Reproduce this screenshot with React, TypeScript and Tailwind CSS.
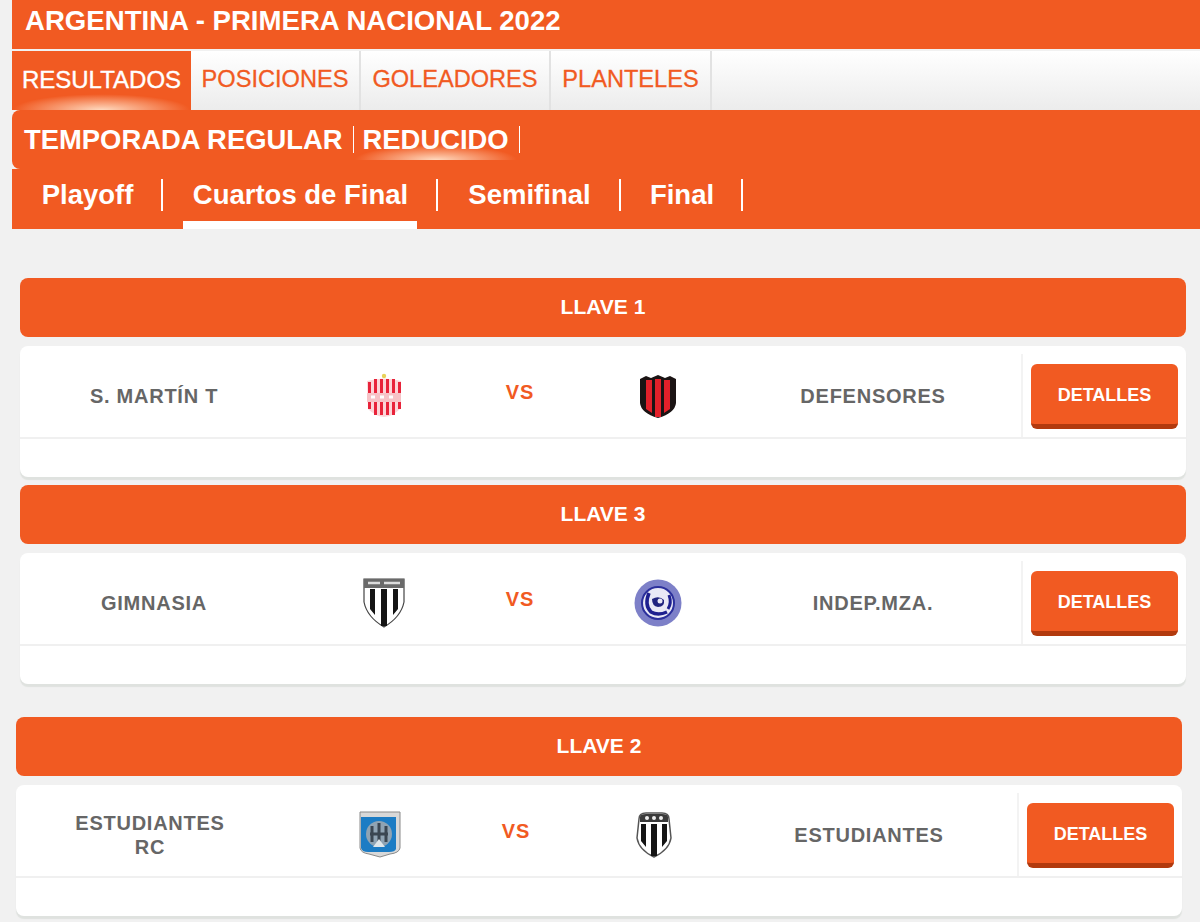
const font = "font-['Liberation_Sans',Arial,sans-serif]"

function SanMartinCrest() {
  const bars = [3, 9, 15, 21, 27, 33]
  return (
    <svg width="38" height="46" viewBox="0 0 38 46">
      <circle cx="19" cy="3" r="2.2" fill="#e8d25a" />
      <path d="M2 8 Q19 3 36 8 L35 36 Q28 43 19 44 Q10 43 3 36 Z" fill="#fbd5d8" />
      {bars.map((x) => (
        <rect key={x} x={x} y={x === 3 || x === 33 ? 9 : 6} width="3" height={x === 3 || x === 33 ? 27 : 36} fill="#e8233a" />
      ))}
      <rect x="2" y="20" width="34" height="9" fill="#f7c3c7" />
      <path d="M6 24h4M15 24h4M24 24h4" stroke="#fff" strokeWidth="3" />
    </svg>
  )
}

function DefensoresCrest() {
  return (
    <svg width="38" height="46" viewBox="0 0 38 46">
      <path d="M1 6 L7 3 L12 5 L19 2 L26 5 L31 3 L37 6 L37 30 Q36 40 19 45 Q2 40 1 30 Z" fill="#1b1414" />
      <path d="M7 7h6v33l-6-4zM16 6h6v38h-6zM25 7h6v29l-6 4z" fill="#e3202a" />
    </svg>
  )
}

function GimnasiaCrest() {
  return (
    <svg width="42" height="50" viewBox="0 0 42 50">
      <path d="M1 1 H41 V24 Q38 39 21 49 Q4 39 1 24 Z" fill="#fff" stroke="#444" strokeWidth="1.2" />
      <rect x="1" y="1" width="40" height="9" fill="#6a6a6a" />
      <path d="M5 5h12M21 5h16" stroke="#ddd" strokeWidth="2.5" />
      <path d="M7 11h5v26l-5-6zM18 11h6v37h-6zM30 11h5v20l-5 6z" fill="#141414" />
    </svg>
  )
}

function IndependienteCrest() {
  return (
    <svg width="48" height="48" viewBox="0 0 48 48">
      <circle cx="24" cy="24" r="23.5" fill="#7d80c8" />
      <circle cx="24" cy="24" r="16" fill="#e9e9f6" stroke="#2b2f9c" strokeWidth="2" />
      <path d="M15 14 Q10 26 17 33 Q24 37 33 33" fill="none" stroke="#1d1f8f" strokeWidth="3.5" />
      <path d="M35 16 Q38 24 34 30" fill="none" stroke="#1d1f8f" strokeWidth="3" />
      <path d="M18 20 Q25 16 30 21 Q31 28 24 28 Q18 27 18 20Z" fill="#20237f" />
      <circle cx="26" cy="22" r="2.5" fill="#e9e9f6" />
    </svg>
  )
}

function AtleticoRafaelaCrest() {
  return (
    <svg width="42" height="48" viewBox="0 0 42 48">
      <path d="M1 1 H41 V37 Q40 42 31 43 L21 46 L10 43 Q2 42 1 37 Z" fill="#d8d8d8" stroke="#8a8a8a" />
      <path d="M2 6 H37 V38 Q36 41 30 41 H9 Q3 41 2 37 Z" fill="#1c7cc4" />
      <circle cx="20" cy="23" r="13" fill="#8fa3b3" />
      <path d="M13 15v16M20 12v22M27 15v16M11 23h18" stroke="#3a4652" strokeWidth="3" />
      <path d="M20 28l6 8h-12z" fill="#dfe6ea" />
    </svg>
  )
}

function EstudiantesCrest() {
  return (
    <svg width="36" height="46" viewBox="0 0 36 46">
      <path d="M3 7 Q3 1 10 1 H26 Q33 1 33 7 L35 26 Q33 38 18 45 Q3 38 1 26 Z" fill="#fff" stroke="#555" strokeWidth="1.5" />
      <path d="M4 5 Q4 2 10 2 H26 Q32 2 32 5 V10 H4Z" fill="#3a3a3a" />
      <circle cx="11" cy="6" r="2" fill="#eee" />
      <circle cx="18" cy="6" r="2" fill="#eee" />
      <circle cx="25" cy="6" r="2" fill="#eee" />
      <path d="M5 12h5v23l-5-6zM15 12h6v32h-6zM26 12h5v17l-5 6z" fill="#141414" />
    </svg>
  )
}

type Llave = {
  title: string
  left: string
  right: string
  leftCrest: React.ReactNode
  rightCrest: React.ReactNode
}

function LlaveCard({ llave }: { llave: Llave }) {
  return (
    <div>
      <div className={`${font} flex h-[59px] items-center justify-center rounded-lg bg-[#f15a22] pb-0.5 text-[21px] font-bold text-white`}>
        {llave.title}
      </div>
      <div className="mt-[9px] h-[131px] rounded-lg bg-white shadow-[0_3px_1px_#dfe2df]">
        <div className="flex h-[93px] items-center border-b-2 border-[#f0f0f0] pt-2">
          <div className={`${font} w-[268px] px-12 text-center text-[20px] leading-[24px] font-bold tracking-[0.75px] text-[#666]`}>
            {llave.left}
          </div>
          <div className="flex w-[192px] justify-center">{llave.leftCrest}</div>
          <div className={`${font} w-[80px] pb-2 text-center text-[20px] font-bold tracking-[1px] text-[#f15a22]`}>VS</div>
          <div className="flex w-[196px] justify-center">{llave.rightCrest}</div>
          <div className={`${font} w-[234px] text-center text-[20px] leading-[24px] font-bold tracking-[0.75px] text-[#666]`}>
            {llave.right}
          </div>
          <div className="ml-[31px] flex h-full w-[164px] items-center border-l-2 border-[#f3f3f3] pt-0.5 pl-2">
            <button className={`${font} h-[65px] w-[147px] rounded-md border-b-[5px] border-[#b23a0e] bg-[#f15a22] pt-0.5 text-[18px] font-bold text-white`}>
              DETALLES
            </button>
          </div>
        </div>
      </div>
    </div>
  )
}

const firstGroup: Llave[] = [
  { title: 'LLAVE 1', left: 'S. MARTÍN T', right: 'DEFENSORES', leftCrest: <SanMartinCrest />, rightCrest: <DefensoresCrest /> },
  { title: 'LLAVE 3', left: 'GIMNASIA', right: 'INDEP.MZA.', leftCrest: <GimnasiaCrest />, rightCrest: <IndependienteCrest /> },
]

const secondLlave: Llave = {
  title: 'LLAVE 2',
  left: 'ESTUDIANTES RC',
  right: 'ESTUDIANTES',
  leftCrest: <AtleticoRafaelaCrest />,
  rightCrest: <EstudiantesCrest />,
}

const tabs = [
  { label: 'RESULTADOS', width: 'w-[179px]', active: true },
  { label: 'POSICIONES', width: 'w-[170px]', active: false },
  { label: 'GOLEADORES', width: 'w-[190px]', active: false },
  { label: 'PLANTELES', width: 'w-[161px]', active: false },
]

const rounds = [
  { label: 'Playoff', width: 'w-[151px]', active: false },
  { label: 'Cuartos de Final', width: 'w-[275px]', active: true },
  { label: 'Semifinal', width: 'w-[183px]', active: false },
  { label: 'Final', width: 'w-[122px]', active: false },
]

const glow = 'pointer-events-none absolute bottom-0 bg-[radial-gradient(ellipse_at_bottom,rgba(255,225,200,0.95),rgba(255,225,200,0)_70%)]'

export default function App() {
  return (
    <div className={`${font} h-[922px] overflow-hidden bg-[#f1f1f1]`}>
      <div className="ml-3">
        <div className="flex h-[49px] items-center bg-[#f15a22] pb-2 pl-[13px] text-[27.6px] font-bold text-white">
          ARGENTINA - PRIMERA NACIONAL 2022
        </div>
        <div className="mt-0.5 flex h-[59px] bg-gradient-to-b from-white to-[#ececec]">
          {tabs.map((tab) =>
            tab.active ? (
              <div key={tab.label} className={`${tab.width} relative flex items-center justify-center bg-[#f15a22] pb-0.5 text-[24px] whitespace-nowrap text-white [-webkit-text-stroke:0.4px_white]`}>
                {tab.label}
                <div className={`${glow} left-0 h-4 w-full`} />
              </div>
            ) : (
              <div key={tab.label} className={`${tab.width} flex items-center justify-center border-r-2 border-[#e2e2e2] pb-0.5 text-[23.6px] whitespace-nowrap text-[#f15a22] [-webkit-text-stroke:0.3px_#f15a22]`}>
                {tab.label}
              </div>
            ),
          )}
        </div>
        <div className="flex h-[59px] items-center rounded-l-lg bg-[#f15a22] pl-3 text-[27.4px] font-bold whitespace-nowrap text-white">
          <span>TEMPORADA REGULAR</span>
          <span className="mr-[9px] ml-[10px] h-[27px] w-px bg-white" />
          <span className="relative">
            REDUCIDO
            <span className={`${glow} -right-[9px] -bottom-[15px] -left-[9px] h-[15px]`} />
          </span>
          <span className="ml-[10px] h-[27px] w-px bg-white" />
        </div>
        <div className="flex h-[60px] bg-[#f15a22] text-[27.5px] font-bold whitespace-nowrap text-white">
          {rounds.map((round) => (
            <div key={round.label} className={`${round.width} flex items-center pb-2`}>
              <div className="flex flex-1 items-center justify-center pl-0.5">{round.label}</div>
              <span className="h-8 w-0.5 shrink-0 bg-white" />
            </div>
          ))}
        </div>
        <div className="relative">
          <div className="absolute bottom-0 left-[171px] h-2 w-[234px] bg-white" />
        </div>
      </div>

      <div className="mt-[49px] mr-[14px] ml-5 flex flex-col gap-2">
        {firstGroup.map((llave) => (
          <LlaveCard key={llave.title} llave={llave} />
        ))}
      </div>
      <div className="mt-[33px] mr-[18px] ml-4">
        <LlaveCard llave={secondLlave} />
      </div>
    </div>
  )
}
